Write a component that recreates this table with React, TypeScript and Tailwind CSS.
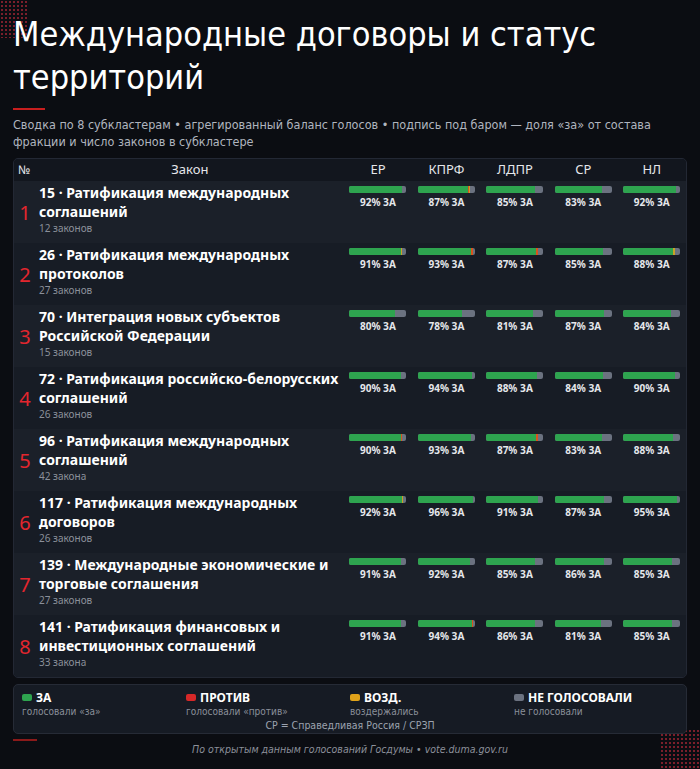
import React from "react";

type Vote = { za: number; pr?: number; vz?: number };

interface Row {
  n: number;
  title: string;
  count: string;
  votes: Vote[];
}

const parties = ["ЕР", "КПРФ", "ЛДПР", "СР", "НЛ"];

const rows: Row[] = [
  { n: 1, title: "15 · Ратификация международных соглашений", count: "12 законов", votes: [{ za: 92 }, { za: 87, pr: 1, vz: 1 }, { za: 85 }, { za: 83 }, { za: 92 }] },
  { n: 2, title: "26 · Ратификация международных протоколов", count: "27 законов", votes: [{ za: 91, vz: 1 }, { za: 93, pr: 1 }, { za: 87, pr: 1 }, { za: 85 }, { za: 88, vz: 1 }] },
  { n: 3, title: "70 · Интеграция новых субъектов Российской Федерации", count: "15 законов", votes: [{ za: 80 }, { za: 78 }, { za: 81 }, { za: 87 }, { za: 84 }] },
  { n: 4, title: "72 · Ратификация российско-белорусских соглашений", count: "26 законов", votes: [{ za: 90 }, { za: 94 }, { za: 88 }, { za: 84 }, { za: 90 }] },
  { n: 5, title: "96 · Ратификация международных соглашений", count: "42 закона", votes: [{ za: 90, pr: 1 }, { za: 93 }, { za: 87, pr: 1 }, { za: 83 }, { za: 88 }] },
  { n: 6, title: "117 · Ратификация международных договоров", count: "26 законов", votes: [{ za: 92, vz: 1 }, { za: 96 }, { za: 91 }, { za: 87 }, { za: 95 }] },
  { n: 7, title: "139 · Международные экономические и торговые соглашения", count: "27 законов", votes: [{ za: 91 }, { za: 92 }, { za: 85 }, { za: 86 }, { za: 85 }] },
  { n: 8, title: "141 · Ратификация финансовых и инвестиционных соглашений", count: "33 закона", votes: [{ za: 91 }, { za: 94, pr: 1 }, { za: 86 }, { za: 81 }, { za: 85 }] },
];

const legend = [
  { c: "bg-[#2ea44f]", label: "ЗА", sub: "голосовали «за»" },
  { c: "bg-[#d62828]", label: "ПРОТИВ", sub: "голосовали «против»" },
  { c: "bg-[#e0a21a]", label: "ВОЗД.", sub: "воздержались" },
  { c: "bg-[#6b7280]", label: "НЕ ГОЛОСОВАЛИ", sub: "не голосовали" },
];

const Bar = ({ v }: { v: Vote }) => (
  <div className="flex flex-col items-center">
    <div className="flex h-[7px] w-[57px] overflow-hidden rounded-[2px] bg-[#6b7280]">
      <div className="bg-[#2ea44f]" style={{ width: `${v.za}%` }} />
      {v.pr ? <div className="bg-[#d9541e]" style={{ width: `${v.pr * 3}%` }} /> : null}
      {v.vz ? <div className="bg-[#c9a227]" style={{ width: `${v.vz * 2}%` }} /> : null}
    </div>
    <div className="mt-[3px] text-[10px] leading-[12px] font-bold text-[#e5e7eb]">{v.za}% ЗА</div>
  </div>
);

export default function App() {
  return (
    <div className="relative h-[769px] w-[700px] overflow-hidden bg-[#0b0d12] font-['Noto_Sans',sans-serif] text-white">
      {/* dot patterns */}
      <div className="absolute top-0 left-0 h-[38px] w-[28px] bg-[radial-gradient(circle,#7a1f2b_0.8px,transparent_1.2px)] bg-[size:4px_4px]" />
      <div className="absolute right-0 bottom-0 h-[40px] w-[40px] bg-[radial-gradient(circle,#7a1f2b_0.8px,transparent_1.2px)] bg-[size:4px_4px]" />

      <div className="relative px-[13px] pt-[13px]">
        <h1 className="font-['DejaVu_Sans_Condensed','DejaVu_Sans',sans-serif] text-[34px] leading-[43px] font-normal text-white">
          Международные договоры и статус территорий
        </h1>
        <div className="mt-[9px] h-[2px] w-[32px] bg-[#c81e1e]" />
        <p className="mt-[6px] font-['DejaVu_Sans_Condensed','DejaVu_Sans',sans-serif] text-[12.5px] leading-[17px] text-[#b0b5bf]">
          Сводка по 8 субкластерам • агрегированный баланс голосов • подпись под баром — доля «за» от состава фракции и число законов в субкластере
        </p>

        <div className="mt-[8px] overflow-hidden rounded-[5px] border border-[#232834] bg-[#161b24]">
          <div className="flex h-[22px] items-center bg-[#12161e] text-[13px] text-[#e5e7eb]">
            <div className="w-[22px] pl-[4px] text-[12px]">№</div>
            <div className="w-[308px] text-center">Закон</div>
            {parties.map((p) => (
              <div key={p} className="w-[68.5px] text-center">{p}</div>
            ))}
          </div>
          {rows.map((r, i) => (
            <div key={r.n} className={`flex h-[62px] ${i % 2 === 0 ? "bg-[#1b2029]" : "bg-[#171c25]"}`}>
              <div className="flex w-[22px] items-center justify-center pt-[1px] text-[20px] text-[#e3262e]">{r.n}</div>
              <div className="w-[308px] pt-[2px] pl-[3px]">
                <div className="text-[14px] leading-[19px] font-bold text-white">{r.title}</div>
                <div className="text-[10px] leading-[14px] text-[#8b909a]">{r.count}</div>
              </div>
              {r.votes.map((v, j) => (
                <div key={j} className="w-[68.5px] pt-[5px]">
                  <Bar v={v} />
                </div>
              ))}
            </div>
          ))}
        </div>

        <div className="mt-[6px] rounded-[5px] border border-[#262b36] bg-[#161b24] px-[8px] pt-[5px] pb-[1px]">
          <div className="grid grid-cols-4">
            {legend.map((l) => (
              <div key={l.label}>
                <div className="flex items-center gap-[4px]">
                  <span className={`h-[7px] w-[10px] rounded-[2px] ${l.c}`} />
                  <span className="text-[12px] leading-[15px] font-bold text-white">{l.label}</span>
                </div>
                <div className="mt-[1px] font-['DejaVu_Sans_Condensed','DejaVu_Sans',sans-serif] text-[10px] leading-[12px] text-[#8b909a]">{l.sub}</div>
              </div>
            ))}
          </div>
          <div className="text-center font-['DejaVu_Sans_Condensed','DejaVu_Sans',sans-serif] text-[10.5px] leading-[14px] text-[#9ca3af]">
            СР = Справедливая Россия / СРЗП
          </div>
        </div>

        <div className="mt-[5px] h-[2px] w-[24px] bg-[#8b1a1a]" />
        <div className="mt-[1px] text-center font-['DejaVu_Sans_Condensed','DejaVu_Sans',sans-serif] text-[10.5px] leading-[14px] text-[#8b909a] italic">
          По открытым данным голосований Госдумы • vote.duma.gov.ru
        </div>
      </div>
    </div>
  );
}
